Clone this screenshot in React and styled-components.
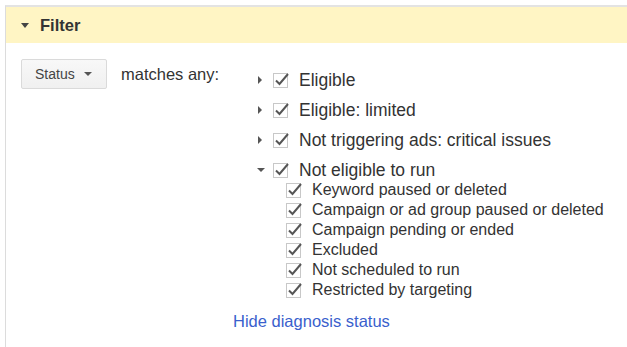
import React, { useState } from 'react'
import styled, { createGlobalStyle } from 'styled-components'

const GlobalStyle = createGlobalStyle`
  html, body {
    margin: 0;
    padding: 0;
    background: #fff;
  }
  body {
    font-family: "Liberation Sans", Arial, sans-serif;
    color: #333;
  }
`

const Panel = styled.div`
  margin: 5px 0 0 5px;
  height: 342px;
  border-top: 2px solid #e3e3e3;
  border-left: 1px solid #dcdcdc;
  box-sizing: border-box;
`

const Header = styled.div`
  display: flex;
  align-items: center;
  height: 36px;
  padding-left: 15px;
  background: #fff5c4;
  font-size: 16.5px;
  font-weight: bold;
  color: #333;
`

const HeaderArrow = styled.span`
  width: 0;
  height: 0;
  border-left: 4px solid transparent;
  border-right: 4px solid transparent;
  border-top: 5px solid #444;
  margin-right: 11px;
  margin-top: 1px;
`

const Body = styled.div`
  display: flex;
  align-items: flex-start;
  padding: 16px 15px;
`

const DropButton = styled.button`
  display: flex;
  align-items: center;
  height: 30px;
  width: 86px;
  padding: 0 0 0 13px;
  border: 1px solid #dadada;
  border-radius: 2px;
  background: linear-gradient(#f8f8f8, #f0f0f0);
  font-family: inherit;
  font-size: 14px;
  color: #444;
  cursor: pointer;
  box-sizing: border-box;
`

const SmallArrow = styled.span`
  width: 0;
  height: 0;
  border-left: 4px solid transparent;
  border-right: 4px solid transparent;
  border-top: 4px solid #555;
  margin-left: 9px;
`

const Matches = styled.span`
  width: 97px;
  margin: 6px 15px 0 14px;
  font-size: 16.5px;
  color: #333;
  white-space: nowrap;
`

const Column = styled.div`
  display: flex;
  flex-direction: column;
  padding-top: 11px;
`

const Tree = styled.div`
  display: flex;
  flex-direction: column;
  gap: 10px;
  margin-left: 22px;
`

const Row = styled.div`
  display: flex;
  align-items: center;
  height: 20px;
  padding-left: ${p => (p.$child ? '31px' : '0')};
  font-size: ${p => (p.$child ? '16px' : '17.5px')};
  color: #333;
  white-space: nowrap;
`

const Toggle = styled.span`
  width: 0;
  height: 0;
  box-sizing: border-box;
  ${p =>
    p.$open
      ? `border-left: 4px solid transparent;
         border-right: 4px solid transparent;
         border-top: 4px solid #555;
         margin-left: 2px;
         margin-right: 8px;`
      : `border-top: 4px solid transparent;
         border-bottom: 4px solid transparent;
         border-left: 4px solid #555;
         margin-left: 3px;
         margin-right: 11px;`}
`

const Group = styled.div`
  display: flex;
  flex-direction: column;
`

const BoxWrap = styled.span`
  display: inline-flex;
  width: 16px;
  height: 16px;
  margin-right: 10px;
  flex: none;
`

const Link = styled.a`
  margin-top: 12px;
  font-size: 16.5px;
  color: #3a5fcd;
  text-decoration: none;
  cursor: pointer;
`

const Check = () => (
  <BoxWrap>
    <svg width="16" height="16" viewBox="0 0 16 16">
      <rect x="0.5" y="1.5" width="14" height="14" fill="#fff" stroke="#c8c8c8" />
      <path d="M3 8.5 L6.5 12 L15 2" fill="none" stroke="#555" strokeWidth="2" />
    </svg>
  </BoxWrap>
)

const top = ['Eligible', 'Eligible: limited', 'Not triggering ads: critical issues']
const reasons = [
  'Keyword paused or deleted',
  'Campaign or ad group paused or deleted',
  'Campaign pending or ended',
  'Excluded',
  'Not scheduled to run',
  'Restricted by targeting',
]

export default function App() {
  const [open] = useState(true)
  return (
    <>
      <GlobalStyle />
      <Panel>
        <Header>
          <HeaderArrow />
          Filter
        </Header>
        <Body>
          <DropButton>
            Status
            <SmallArrow />
          </DropButton>
          <Matches>matches any:</Matches>
          <Column>
            <Tree>
              {top.map(t => (
                <Row key={t}>
                  <Toggle />
                  <Check />
                  {t}
                </Row>
              ))}
              <Group>
                <Row>
                  <Toggle $open={open} />
                  <Check />
                  Not eligible to run
                </Row>
                {reasons.map(r => (
                  <Row key={r} $child>
                    <Check />
                    {r}
                  </Row>
                ))}
              </Group>
            </Tree>
            <Link>Hide diagnosis status</Link>
          </Column>
        </Body>
      </Panel>
    </>
  )
}
